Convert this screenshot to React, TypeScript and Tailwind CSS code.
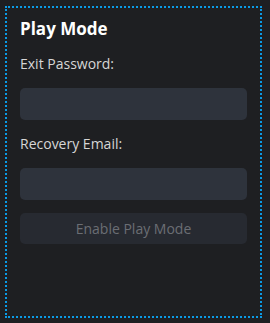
import React from 'react';

export default function App() {
  return (
    <div
      className="w-[270px] h-[323px] bg-[#1e1f22] pt-[6px] pl-[5px]"
      style={{ fontFamily: '"Open Sans", "Noto Sans", sans-serif' }}
    >
      <div className="w-[257px] h-[312px] border-2 border-dotted border-[#0b9be6] px-[13px] pt-[9px] flex flex-col">
        <h2 className="text-[17px] leading-[24px] font-bold text-white">Play Mode</h2>
        <label className="mt-[13px] text-[14px] leading-[20px] text-[#d6d6d6]">Exit Password:</label>
        <input
          type="password"
          className="mt-[14px] h-[32px] w-full rounded-[5px] bg-[#2e333c] px-3 text-[#d6d6d6] outline-none"
        />
        <label className="mt-[14px] text-[14px] leading-[20px] text-[#d6d6d6]">Recovery Email:</label>
        <input
          type="email"
          className="mt-[14px] h-[32px] w-full rounded-[5px] bg-[#2e333c] px-3 text-[#d6d6d6] outline-none"
        />
        <button
          disabled
          className="mt-[13px] h-[31px] w-full rounded-[5px] bg-[#272a31] text-[14px] text-[#6b6e74]"
        >
          Enable Play Mode
        </button>
      </div>
    </div>
  );
}
